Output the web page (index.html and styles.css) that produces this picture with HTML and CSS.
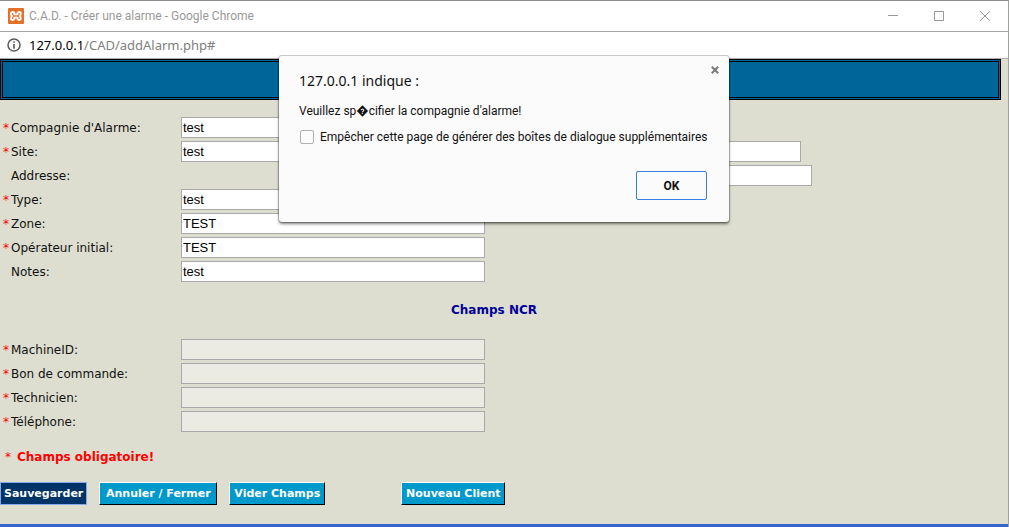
FILE: index.html
```html
<!DOCTYPE html>
<html lang="fr">
<head>
<meta charset="utf-8">
<title>C.A.D. - Créer une alarme</title>
<link rel="stylesheet" href="styles.css">
</head>
<body>
<div class="window">
  <header class="titlebar">
    <svg class="favicon" viewBox="0 0 16 16" aria-hidden="true">
      <rect width="16" height="16" rx="1" fill="#e3712d"/>
      <path d="M3 6.500V5.500C3 3.500 6.300 3.500 6.300 5.500V6.300H9.500V5.500C9.500 3.500 12.800 3.500 12.800 5.500C12.800 7 12.300 7.800 11.300 8C12.300 8.200 12.800 9 12.800 10.500C12.800 12.500 9.500 12.500 9.500 10.500V9.700H6.300V10.500C6.300 12.500 3 12.500 3 10.500C3 9 3.500 8.200 4.500 8C3.500 7.800 3 7.300 3 6.500z" fill="none" stroke="#fff" stroke-width="1.800"/>
    </svg>
    <span class="window-title">C.A.D. - Créer une alarme - Google Chrome</span>
    <div class="window-controls">
      <button class="window-button" aria-label="Réduire"><svg viewBox="0 0 10 10"><path d="M0 4.500h10"/></svg></button>
      <button class="window-button" aria-label="Agrandir"><svg viewBox="0 0 10 10"><path d="M.5.5h9v9h-9z"/></svg></button>
      <button class="window-button" aria-label="Fermer"><svg viewBox="0 0 10 10"><path d="M0 0l10 10M10 0L0 10"/></svg></button>
    </div>
  </header>
  <div class="addressbar">
    <svg class="info" viewBox="0 0 14 14" aria-hidden="true">
      <circle cx="7" cy="7" r="6" fill="none" stroke="#5a5a5a" stroke-width="1.500"/>
      <path d="M6.200 3.300h1.600v1.500H6.200zM6.200 6h1.600v4.700H6.200z" fill="#5a5a5a"/>
    </svg>
    <span class="url"><span class="host">127.0.0.1</span>/CAD/addAlarm.php#</span>
  </div>
  <main class="page">
    <div class="banner"></div>
    <form class="form">
      <div class="row"><label class="label" for="compagnie"><span class="mark">*</span>Compagnie d'Alarme:</label><input class="field" id="compagnie" value="test"></div>
      <div class="row"><label class="label" for="site"><span class="mark">*</span>Site:</label><input class="field" id="site" value="test"><input class="field field-extra" aria-label="Nom du site"></div>
      <div class="row"><label class="label" for="adresse"><span class="mark"></span>Addresse:</label><input class="field field-address" id="adresse"></div>
      <div class="row"><label class="label" for="type"><span class="mark">*</span>Type:</label><input class="field" id="type" value="test"></div>
      <div class="row"><label class="label" for="zone"><span class="mark">*</span>Zone:</label><input class="field" id="zone" value="TEST"></div>
      <div class="row"><label class="label" for="operateur"><span class="mark">*</span>Opérateur initial:</label><input class="field" id="operateur" value="TEST"></div>
      <div class="row"><label class="label" for="notes"><span class="mark"></span>Notes:</label><input class="field" id="notes" value="test"></div>
      <h2 class="section">Champs NCR</h2>
      <div class="row"><label class="label" for="machine"><span class="mark">*</span>MachineID:</label><input class="field" id="machine" disabled></div>
      <div class="row"><label class="label" for="bon"><span class="mark">*</span>Bon de commande:</label><input class="field" id="bon" disabled></div>
      <div class="row"><label class="label" for="technicien"><span class="mark">*</span>Technicien:</label><input class="field" id="technicien" disabled></div>
      <div class="row"><label class="label" for="telephone"><span class="mark">*</span>Téléphone:</label><input class="field" id="telephone" disabled></div>
      <p class="required"><span class="star">*</span>Champs obligatoire!</p>
      <div class="actions">
        <button type="button" class="action action-active">Sauvegarder</button>
        <button type="button" class="action action-wide">Annuler / Fermer</button>
        <button type="button" class="action">Vider Champs</button>
        <button type="button" class="action action-client">Nouveau Client</button>
      </div>
    </form>
  </main>
  <section class="dialog" role="dialog" aria-labelledby="dialog-title">
    <div class="dialog-head">
      <h1 class="dialog-title" id="dialog-title">127.0.0.1 indique :</h1>
      <button class="dialog-close" aria-label="Fermer"><svg viewBox="0 0 8 8"><path d="M.8.8l6.400 6.400M7.200.8L.8 7.200"/></svg></button>
    </div>
    <p class="message">Veuillez sp&#xFFFD;cifier la compagnie d'alarme!</p>
    <label class="suppress"><input type="checkbox" class="check">Empêcher cette page de générer des boîtes de dialogue supplémentaires</label>
    <button class="ok">OK</button>
  </section>
</div>
</body>
</html>
```
FILE: styles.css
```css
* { box-sizing: border-box; }
body { margin: 0; font-family: Roboto, "Noto Sans", sans-serif; }
button { font-family: inherit; padding: 0; }
.window {
  position: relative;
  display: flex;
  flex-direction: column;
  min-height: 100vh;
  border-top: 1px solid #8c8c8c;
  border-right: 1px solid #9fa19f;
  background: #fff;
}
.titlebar {
  display: flex;
  align-items: center;
  height: 31px;
  padding-left: 8px;
  border-bottom: 1px solid #a5a5a5;
  font-size: 12px;
  color: #999;
}
.favicon { width: 16px; height: 16px; margin-right: 5px; }
.window-controls { display: flex; margin-left: auto; }
.window-button {
  display: flex;
  align-items: center;
  justify-content: center;
  width: 46px;
  height: 30px;
  border: 0;
  background: none;
}
.window-button svg { width: 10px; height: 10px; fill: none; stroke: #999; stroke-width: 1; }
.addressbar {
  display: flex;
  align-items: center;
  height: 27px;
  padding-left: 7px;
  border-bottom: 1px solid #b0b0b0;
  font-family: "Noto Sans", sans-serif;
  font-size: 13px;
}
.info { width: 14px; height: 14px; margin-right: 8px; }
.url { color: #808080; }
.host { color: #000; }
.page {
  flex: 1;
  background: #ddded0;
  border-bottom: 3px solid #3366cc;
  font-family: "DejaVu Sans", sans-serif;
  font-size: 12px;
}
.banner {
  height: 41px;
  margin-right: 7px;
  background: #006699;
  border: 3px double #000;
}
.form { padding: 17px 0 18px; }
.row { display: flex; align-items: center; height: 24px; padding-bottom: 3px; }
.label { display: flex; flex: none; width: 181px; padding-left: 3px; color: #111; }
.mark { width: 8px; color: #f00; }
.field {
  width: 304px;
  height: 21px;
  padding: 1px;
  border: 1px solid #a9a9a9;
  background: #fff;
  font-family: "Liberation Sans", sans-serif;
  font-size: 13px;
  color: #000;
}
.field:disabled { background: #ebebe4; }
.field-extra { margin-left: 12px; }
.field-address { margin-left: 327px; }
.section {
  margin: 0;
  padding: 18px 20px 21px 0;
  font-size: 12px;
  line-height: 15px;
  text-align: center;
  color: #000099;
}
.required { margin: 14px 0 17px; padding-left: 5px; font-weight: bold; line-height: 16px; color: #f00; }
.star { display: inline-block; width: 12px; font-weight: normal; }
.actions { display: flex; gap: 12px; }
.action {
  min-width: 96px;
  height: 23px;
  padding: 0 3px;
  border: 1px solid;
  border-color: #fff #000 #000 #fff;
  background: #0099cc;
  font-size: 11px;
  font-weight: bold;
  color: #fff;
}
.action-active { min-width: 87px; border-color: #003366; background: #003366; outline: 1px solid #86a8e8; outline-offset: -1px; }
.action-wide { min-width: 118px; }
.action-client { min-width: 104px; margin-left: 64px; }
.dialog {
  position: absolute;
  top: 55px;
  left: 50%;
  width: 450px;
  margin-left: -225px;
  padding: 15px 22px 22px 20px;
  display: flex;
  flex-direction: column;
  border-radius: 3px;
  background: #fbfbfb;
  box-shadow: 0 0 0 1px rgba(0, 0, 0, .2), 0 2px 3px rgba(0, 0, 0, .5);
  font-size: 12px;
  color: #111;
}
.dialog-head { display: flex; justify-content: space-between; }
.dialog-title { margin: 0; font-family: "Noto Sans", sans-serif; font-size: 14px; font-weight: normal; line-height: 20px; }
.dialog-close { display: flex; width: 8px; height: 8px; margin: -5px -12px 0 0; border: 0; background: none; }
.dialog-close svg { width: 8px; height: 8px; stroke: #777; stroke-width: 2; }
.message { margin: 12px 0 8px; line-height: 16px; }
.suppress { display: flex; align-items: center; height: 20px; white-space: nowrap; }
.check {
  flex: none;
  appearance: none;
  width: 14px;
  height: 14px;
  margin: 0 6px 0 1px;
  border: 1px solid #b0b0b0;
  border-radius: 2px;
  background: #fbfbfb;
}
.ok {
  align-self: flex-end;
  width: 71px;
  height: 29px;
  margin-top: 24px;
  border: 1px solid #3b7ce0;
  border-radius: 2px;
  background: #fbfbfb;
  font-size: 12px;
  font-weight: bold;
  color: #111;
}
```
